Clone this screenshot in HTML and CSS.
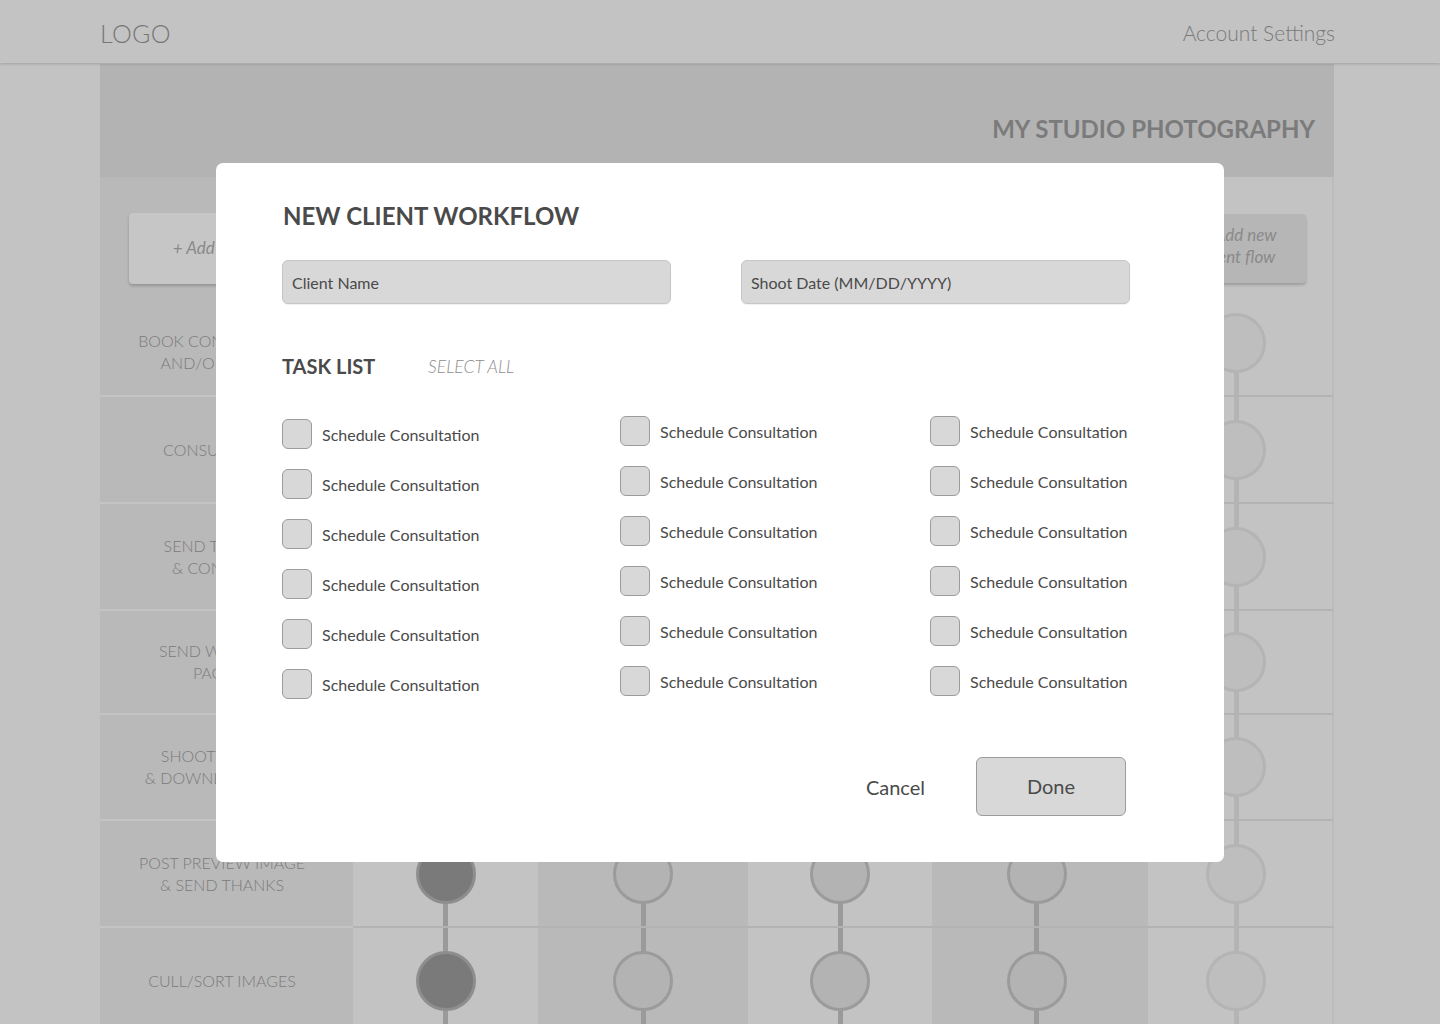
FILE: index.html
```html
<!DOCTYPE html>
<html>
<head>
<meta charset="utf-8">
<title>New Client Workflow</title>
<link rel="stylesheet" href="styles.css">
</head>
<body>
<header class="topbar">
  <div class="logo">LOGO</div>
  <div class="account">Account Settings</div>
</header>
<main class="main">
  <div class="banner"><h1 class="studio">MY STUDIO PHOTOGRAPHY</h1></div>
  <div class="board">
    <div class="cell lbl head"><div class="add-card">+ Add new task</div></div>
    <div class="cell lt head"></div>
    <div class="cell dk head"></div>
    <div class="cell lt head"></div>
    <div class="cell dk head"></div>
    <div class="cell lt head"><div class="flow-card">+ Add new<br>client flow</div></div>

    <div class="cell lbl row lbl-first">BOOK CONSULTATION<br>AND/OR SHOOT</div>
    <div class="cell lt row first c1"><span class="dot on"></span></div>
    <div class="cell dk row first c2"><span class="dot"></span></div>
    <div class="cell lt row first c3"><span class="dot"></span></div>
    <div class="cell dk row first c4"><span class="dot"></span></div>
    <div class="cell lt row first c5"><span class="dot faded"></span></div>

    <div class="cell lbl row">CONSULTATION</div>
    <div class="cell lt row c1"><span class="dot on"></span></div>
    <div class="cell dk row c2"><span class="dot"></span></div>
    <div class="cell lt row c3"><span class="dot"></span></div>
    <div class="cell dk row c4"><span class="dot"></span></div>
    <div class="cell lt row c5"><span class="dot faded"></span></div>

    <div class="cell lbl row">SEND TIMELINE<br>&amp; CONTRACT</div>
    <div class="cell lt row c1"><span class="dot on"></span></div>
    <div class="cell dk row c2"><span class="dot"></span></div>
    <div class="cell lt row c3"><span class="dot"></span></div>
    <div class="cell dk row c4"><span class="dot"></span></div>
    <div class="cell lt row c5"><span class="dot faded"></span></div>

    <div class="cell lbl row">SEND WELCOME<br>PACKET</div>
    <div class="cell lt row c1"><span class="dot on"></span></div>
    <div class="cell dk row c2"><span class="dot"></span></div>
    <div class="cell lt row c3"><span class="dot"></span></div>
    <div class="cell dk row c4"><span class="dot"></span></div>
    <div class="cell lt row c5"><span class="dot faded"></span></div>

    <div class="cell lbl row">SHOOT SESSION<br>&amp; DOWNLOAD FILES</div>
    <div class="cell lt row c1"><span class="dot on"></span></div>
    <div class="cell dk row c2"><span class="dot"></span></div>
    <div class="cell lt row c3"><span class="dot"></span></div>
    <div class="cell dk row c4"><span class="dot"></span></div>
    <div class="cell lt row c5"><span class="dot faded"></span></div>

    <div class="cell lbl row">POST PREVIEW IMAGE<br>&amp; SEND THANKS</div>
    <div class="cell lt row c1"><span class="dot on"></span></div>
    <div class="cell dk row c2"><span class="dot"></span></div>
    <div class="cell lt row c3"><span class="dot"></span></div>
    <div class="cell dk row c4"><span class="dot"></span></div>
    <div class="cell lt row c5"><span class="dot faded"></span></div>

    <div class="cell lbl row">CULL/SORT IMAGES</div>
    <div class="cell lt row c1"><span class="dot on"></span></div>
    <div class="cell dk row c2"><span class="dot"></span></div>
    <div class="cell lt row c3"><span class="dot"></span></div>
    <div class="cell dk row c4"><span class="dot"></span></div>
    <div class="cell lt row c5"><span class="dot faded"></span></div>
  </div>
</main>

<div class="modal">
  <h2 class="modal-title">NEW CLIENT WORKFLOW</h2>
  <div class="fields">
    <div class="field">Client Name</div>
    <div class="field">Shoot Date (MM/DD/YYYY)</div>
  </div>
  <div class="tasks-head">
    <h3 class="tasks-title">TASK LIST</h3>
    <span class="select-all">SELECT ALL</span>
  </div>
  <div class="tasks">
    <div class="task-col col-a">
      <label class="task"><span class="box"></span>Schedule Consultation</label>
      <label class="task"><span class="box"></span>Schedule Consultation</label>
      <label class="task"><span class="box"></span>Schedule Consultation</label>
      <label class="task"><span class="box"></span>Schedule Consultation</label>
      <label class="task"><span class="box"></span>Schedule Consultation</label>
      <label class="task"><span class="box"></span>Schedule Consultation</label>
    </div>
    <div class="task-col">
      <label class="task"><span class="box"></span>Schedule Consultation</label>
      <label class="task"><span class="box"></span>Schedule Consultation</label>
      <label class="task"><span class="box"></span>Schedule Consultation</label>
      <label class="task"><span class="box"></span>Schedule Consultation</label>
      <label class="task"><span class="box"></span>Schedule Consultation</label>
      <label class="task"><span class="box"></span>Schedule Consultation</label>
    </div>
    <div class="task-col">
      <label class="task"><span class="box"></span>Schedule Consultation</label>
      <label class="task"><span class="box"></span>Schedule Consultation</label>
      <label class="task"><span class="box"></span>Schedule Consultation</label>
      <label class="task"><span class="box"></span>Schedule Consultation</label>
      <label class="task"><span class="box"></span>Schedule Consultation</label>
      <label class="task"><span class="box"></span>Schedule Consultation</label>
    </div>
  </div>
  <div class="actions">
    <button class="btn-cancel">Cancel</button>
    <button class="btn-done">Done</button>
  </div>
</div>
</body>
</html>
```

FILE: styles.css
```css
* { box-sizing: border-box; }

html, body {
  margin: 0;
  padding: 0;
}

body {
  background: #c3c3c3;
  font-family: "Lato", "Noto Sans", sans-serif;
  color: #4a4a4a;
  width: 1440px;
  height: 1024px;
  overflow: hidden;
}

/* ---------- top bar ---------- */
.topbar {
  height: 63px;
  background: #c3c3c3;
  display: flex;
  align-items: center;
  justify-content: space-between;
  padding: 2px 105px 0 100px;
  box-shadow: 0 1px 3px rgba(0, 0, 0, 0.18);
  position: relative;
  z-index: 1;
}

.logo {
  font-size: 25px;
  font-weight: 300;
  color: #777777;
  letter-spacing: 0.3px;
}

.account {
  font-size: 21px;
  font-weight: 300;
  color: #7a7a7a;
}

/* ---------- main board ---------- */
.main {
  margin: 1px 106px 0 100px;
}

.banner {
  height: 113px;
  background: #b3b3b3;
  display: flex;
  align-items: center;
  justify-content: flex-end;
  padding: 16px 19px 0 0;
}

.studio {
  margin: 0;
  font-size: 24px;
  font-weight: 700;
  color: #7b7b7b;
}

.board {
  display: grid;
  grid-template-columns: 253px 185px 210px 184px 216px 186px;
  grid-template-rows: 113px 107px 107px 107px 104px 106px 107px 107px;
}

.cell { min-width: 0; }
.lbl { background: #b9b9b9; }
.lt  { background: #c3c3c3; }
.dk  { background: #b9b9b9; }
.board > .cell:nth-child(6n) { border-right: 2px solid #bcbcbc; }

.add-card {
  margin: 36px 0 0 29px;
  width: 196px;
  height: 71px;
  background: #c6c6c6;
  border-radius: 4px;
  box-shadow: 0 2px 3px rgba(0, 0, 0, 0.2);
  display: flex;
  align-items: center;
  justify-content: center;
  font-style: italic;
  font-size: 17px;
  color: #8a8a8a;
  padding-bottom: 2px;
}

.flow-card {
  margin: 37px 0 0 18px;
  width: 140px;
  height: 69px;
  background: #b6b6b6;
  border-radius: 4px;
  box-shadow: 0 2px 3px rgba(0, 0, 0, 0.2);
  display: flex;
  align-items: center;
  justify-content: center;
  text-align: center;
  font-style: italic;
  font-size: 17px;
  line-height: 22px;
  color: #8a8a8a;
  padding: 0 0 6px 6px;
}

.row {
  border-bottom: 2px solid #b3b3b3;
  display: flex;
  align-items: center;
  justify-content: center;
}

.lbl.row {
  border-bottom-color: #c4c4c4;
  text-align: center;
  font-size: 16px;
  font-weight: 300;
  line-height: 22px;
  color: #7b7b7b;
  padding-right: 9px;
}
.lbl.row.lbl-first { padding-top: 18px; }

/* connector lines drawn as backgrounds */
.c1, .c2, .c3, .c4, .c5 {
  background-image: linear-gradient(#9a9a9a, #9a9a9a);
  background-repeat: no-repeat;
  background-size: 5px 100%;
  background-position: center top;
}
.c4 {
  padding-right: 6px;
  background-position: 102px top;
}
.c5 {
  background-image: linear-gradient(#b4b4b4, #b4b4b4);
  padding-right: 8px;
  background-position: 86px top;
}
.first { background-size: 5px 50%; background-position-y: bottom; }

.dot {
  width: 60px;
  height: 60px;
  border-radius: 50%;
  background: #b3b3b3;
  border: 3px solid #9b9b9b;
  display: block;
}
.dot.on {
  background: #7a7a7a;
  border-color: #8e8e8e;
}
.dot.faded {
  background: #bebebe;
  border-color: #b4b4b4;
}

/* ---------- modal ---------- */
.modal {
  position: absolute;
  left: 216px;
  top: 163px;
  width: 1008px;
  height: 699px;
  background: #ffffff;
  border-radius: 7px;
  padding: 38px 94px 0 66px;
  z-index: 5;
}

.modal-title {
  margin: 0;
  font-size: 24px;
  line-height: 30px;
  font-weight: 700;
  color: #4a4a4a;
  padding-left: 1px;
}

.fields {
  display: flex;
  gap: 70px;
  margin-top: 29px;
}

.field {
  flex: none;
  width: 389px;
  height: 44px;
  background: #d8d8d8;
  border: 1px solid #c6c6c6;
  border-radius: 6px;
  padding: 0 9px;
  display: flex;
  align-items: center;
  font-size: 16px;
  color: #4a4a4a;
  box-shadow: 0 1px 1px rgba(0, 0, 0, 0.06);
}

.tasks-head {
  display: flex;
  align-items: center;
  margin-top: 50px;
  height: 24px;
}

.tasks-title {
  margin: 0;
  font-size: 20px;
  font-weight: 700;
  color: #4a4a4a;
  width: 146px;
}

.select-all {
  font-size: 17.5px;
  font-style: italic;
  font-weight: 300;
  color: #8e8e8e;
}

.tasks {
  display: grid;
  grid-template-columns: 338px 310px auto;
  margin-top: 38px;
}

.task-col {
  display: flex;
  flex-direction: column;
  gap: 20px;
}
.task-col.col-a { padding-top: 3px; }

.task {
  display: flex;
  align-items: center;
  height: 30px;
  font-size: 16px;
  white-space: nowrap;
  color: #4a4a4a;
}

.box {
  width: 30px;
  height: 30px;
  flex: none;
  background: #d8d8d8;
  border: 1px solid #9c9c9c;
  border-radius: 6px;
  margin-right: 10px;
}

.actions {
  display: flex;
  justify-content: flex-end;
  align-items: center;
  margin-top: 58px;
  padding-right: 4px;
  gap: 51px;
}

.btn-cancel {
  background: none;
  border: 0;
  padding: 0;
  font-family: inherit;
  font-size: 20px;
  color: #4a4a4a;
}

.btn-done {
  width: 150px;
  height: 59px;
  background: #d8d8d8;
  border: 1px solid #9c9c9c;
  border-radius: 6px;
  font-family: inherit;
  font-size: 20px;
  color: #4a4a4a;
  padding-bottom: 3px;
}
```
